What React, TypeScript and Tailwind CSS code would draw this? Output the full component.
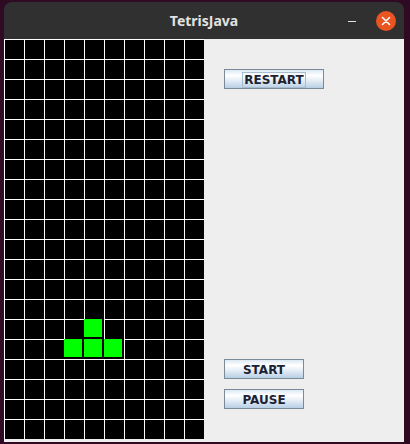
import React from "react";

const ROWS = 20;
const COLS = 10;
const piece = new Set(["14-4", "15-3", "15-4", "15-5"]);

const btn =
  "flex h-5 items-center justify-center border border-[#7a8a99] pt-px bg-[linear-gradient(to_bottom,#dde8f3_0%,#ffffff_30%,#e8eff7_55%,#b8cfe5_100%)] text-[12px] font-bold text-[#1d2233] [font-family:'DejaVu_Sans',sans-serif]";

export default function App() {
  const cells = [];
  for (let r = 0; r < ROWS; r++) {
    for (let c = 0; c < COLS; c++) {
      const on = piece.has(`${r}-${c}`);
      cells.push(
        on ? (
          <div key={`${r}-${c}`} className="h-5 w-5 bg-black">
            <div className="h-[18px] w-[18px] bg-[#00ff00]" />
          </div>
        ) : (
          <div
            key={`${r}-${c}`}
            className="h-5 w-5 border-l border-t border-white bg-black"
          />
        )
      );
    }
  }

  return (
    <div className="h-[444px] w-[410px] bg-[#2e0a23] px-[4px] pt-[2px]">
      <div className="flex h-[440px] w-[400px] flex-col overflow-hidden rounded-t-[8px]">
        {/* title bar */}
        <div className="grid h-[37px] shrink-0 grid-cols-[1fr_auto_1fr] items-center bg-[#303030] [font-family:'Noto_Sans',sans-serif]">
          <div />
          <div className="text-[14px] font-bold text-[#e2e2e2]">TetrisJava</div>
          <div className="flex items-center justify-end pr-[8px]">
            <div className="mt-[2px] mr-[20px] h-[1.5px] w-[8px] bg-[#e2e2e2]" />
            <div className="flex h-5 w-5 items-center justify-center rounded-full bg-[#e95420]">
              <svg width="10" height="10" viewBox="0 0 10 10">
                <path
                  d="M1.5 1.5 L8.5 8.5 M8.5 1.5 L1.5 8.5"
                  stroke="white"
                  strokeWidth="1.6"
                  strokeLinecap="round"
                />
              </svg>
            </div>
          </div>
        </div>

        {/* content */}
        <div className="flex h-[403px] bg-[#eeeeee]">
          <div className="grid h-[400px] w-[200px] shrink-0 grid-cols-[repeat(10,20px)]">
            {cells}
          </div>
          <div className="flex flex-col pl-5 pt-[30px]">
            <button type="button" className={`${btn} w-[100px]`}>
              <span className="flex h-[16px] items-center border border-[#a9bccf] px-[1px]">
                RESTART
              </span>
            </button>
            <button type="button" className={`${btn} mt-[270px] w-[80px]`}>
              START
            </button>
            <button type="button" className={`${btn} mt-[10px] w-[80px]`}>
              PAUSE
            </button>
          </div>
        </div>
      </div>
    </div>
  );
}
